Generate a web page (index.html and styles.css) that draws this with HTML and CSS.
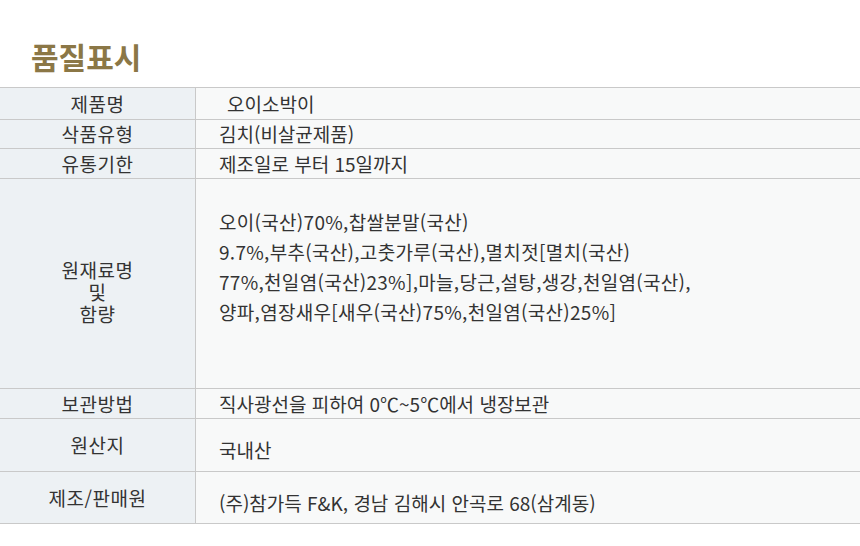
FILE: index.html
```html
<!DOCTYPE html>
<html lang="ko">
<head>
<meta charset="utf-8">
<link rel="stylesheet" href="styles.css">
</head>
<body>
<h1 class="title">품질표시</h1>
<table class="spec">
  <tr class="r1"><th>제품명</th><td class="indent">오이소박이</td></tr>
  <tr class="r2"><th>삭품유형</th><td>김치(비살균제품)</td></tr>
  <tr class="r3"><th>유통기한</th><td>제조일로 부터 15일까지</td></tr>
  <tr class="r4"><th class="stack">원재료명<br>및<br>함량</th><td class="multi">오이(국산)70%,찹쌀분말(국산)<br>9.7%,부추(국산),고춧가루(국산),멸치젓[멸치(국산)<br>77%,천일염(국산)23%],마늘,당근,설탕,생강,천일염(국산),<br>양파,염장새우[새우(국산)75%,천일염(국산)25%]</td></tr>
  <tr class="r5"><th>보관방법</th><td>직사광선을 피하여 0℃~5℃에서 냉장보관</td></tr>
  <tr class="r6"><th>원산지</th><td class="low">국내산</td></tr>
  <tr class="r7"><th>제조/판매원</th><td class="low">(주)참가득 F&amp;K, 경남 김해시 안곡로 68(삼계동)</td></tr>
</table>
</body>
</html>
```

FILE: styles.css
```css
html, body {
  margin: 0;
  padding: 0;
  background: #ffffff;
}
body {
  font-family: "Noto Sans CJK KR", "Noto Sans", sans-serif;
  color: #333333;
}
.title {
  margin: 0;
  padding: 36px 0 0 31px;
  height: 87px;
  box-sizing: border-box;
  font-size: 30px;
  line-height: 40px;
  font-weight: 700;
  color: #8b7746;
}
.spec {
  width: 860px;
  border-collapse: collapse;
  font-size: 19px;
}
.spec th, .spec td {
  border-top: 1px solid #c9c9c9;
  border-bottom: 1px solid #c9c9c9;
  padding: 0;
  font-weight: 400;
  vertical-align: middle;
  line-height: 20px;
}
.spec th {
  width: 195px;
  background: #edf1f4;
  border-right: 1px solid #c9c9c9;
  text-align: center;
  letter-spacing: 0.5px;
}
.spec th.stack {
  line-height: 22px;
  padding-top: 16px;
}
.spec td {
  background: #f8f9f9;
  text-align: left;
  padding-left: 23px;
}
.spec td.indent { padding-left: 31px; }
.r1 { height: 32px; }
.r2 { height: 29px; }
.r3 { height: 30px; }
.r4 { height: 210px; }
.r5 { height: 30px; }
.r6 { height: 53px; }
.r7 { height: 52px; }
.spec td.multi {
  line-height: 30px;
  padding-bottom: 34px;
  letter-spacing: 0.3px;
}
.spec td.low {
  padding-top: 10px;
}
```
